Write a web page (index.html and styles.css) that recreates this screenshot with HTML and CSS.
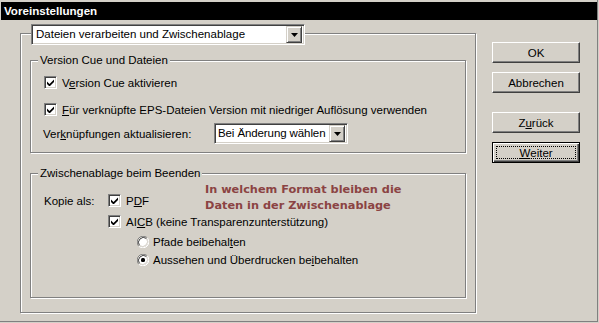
FILE: index.html
```html
<!DOCTYPE html>
<html>
<head>
  <title>Voreinstellungen</title>
  <link rel="stylesheet" href="styles.css">
</head>
<body>
  <div class="window">
    <div class="titlebar">Voreinstellungen</div>

    <div class="content">
      <div class="frame outer">
        <div class="combo panel-combo">
          <span class="combo-text">Dateien verarbeiten und Zwischenablage</span>
          <span class="combo-button"><svg width="7" height="4" viewBox="0 0 7 4"><path d="M0 0h7L3.5 4z" fill="#000"/></svg></span>
        </div>

        <div class="frame group group-version">
          <div class="group-title">Version Cue und Dateien</div>
          <div class="row row-first">
            <span class="check"><svg width="7" height="7" viewBox="0 0 7 7"><path d="M0 2.5l2.5 2.5L7 0.5v2.6L2.5 7.5 0 5z" fill="#000"/></svg></span>
            <span class="label">V<u>e</u>rsion Cue aktivieren</span>
          </div>
          <div class="row row-second">
            <span class="check"><svg width="7" height="7" viewBox="0 0 7 7"><path d="M0 2.5l2.5 2.5L7 0.5v2.6L2.5 7.5 0 5z" fill="#000"/></svg></span>
            <span class="label"><u>F</u>ür verknüpfte EPS-Dateien Version mit niedriger Auflösung verwenden</span>
          </div>
          <div class="row row-select">
            <span class="select-label">Ver<u>k</u>nüpfungen aktualisieren:</span>
            <div class="combo small-combo">
              <span class="combo-text">Bei Änderung wählen</span>
              <span class="combo-button"><svg width="7" height="4" viewBox="0 0 7 4"><path d="M0 0h7L3.5 4z" fill="#000"/></svg></span>
            </div>
          </div>
        </div>

        <div class="frame group group-clip">
          <div class="group-title">Zwischenablage beim Beenden</div>
          <div class="note">In welchem Format bleiben die<br>Daten in der Zwischenablage</div>
          <div class="row row-copy">
            <span class="copy-label">Kopie als:</span>
            <span class="check"><svg width="7" height="7" viewBox="0 0 7 7"><path d="M0 2.5l2.5 2.5L7 0.5v2.6L2.5 7.5 0 5z" fill="#000"/></svg></span>
            <span class="label">P<u>D</u>F</span>
          </div>
          <div class="row row-aicb">
            <span class="check"><svg width="7" height="7" viewBox="0 0 7 7"><path d="M0 2.5l2.5 2.5L7 0.5v2.6L2.5 7.5 0 5z" fill="#000"/></svg></span>
            <span class="label">AI<u>C</u>B (keine Transparenzunterstützung)</span>
          </div>
          <div class="row radio-row radio-first">
            <svg class="radio" width="12" height="12" viewBox="0 0 12 12">
              <circle cx="6" cy="6" r="5" fill="#fff"/>
              <path d="M10.24 1.76A6 6 0 0 0 1.76 10.24" stroke="#808080" fill="none"/>
              <path d="M1.76 10.24A6 6 0 0 0 10.24 1.76" stroke="#fff" fill="none"/>
              <path d="M9.5 2.5A5 5 0 0 0 2.5 9.5" stroke="#404040" fill="none"/>
              <path d="M2.5 9.5A5 5 0 0 0 9.5 2.5" stroke="#d4d0c8" fill="none"/>
            </svg>
            <span class="label">Pfade beibehal<u>t</u>en</span>
          </div>
          <div class="row radio-row radio-second">
            <svg class="radio" width="12" height="12" viewBox="0 0 12 12">
              <circle cx="6" cy="6" r="5" fill="#fff"/>
              <path d="M10.24 1.76A6 6 0 0 0 1.76 10.24" stroke="#808080" fill="none"/>
              <path d="M1.76 10.24A6 6 0 0 0 10.24 1.76" stroke="#fff" fill="none"/>
              <path d="M9.5 2.5A5 5 0 0 0 2.5 9.5" stroke="#404040" fill="none"/>
              <path d="M2.5 9.5A5 5 0 0 0 9.5 2.5" stroke="#d4d0c8" fill="none"/>
              <rect x="4" y="4" width="4" height="4" rx="1.5" fill="#000"/>
            </svg>
            <span class="label">Aussehen und Überdrucken be<u>i</u>behalten</span>
          </div>
        </div>
      </div>

      <div class="buttons">
        <div class="button">OK</div>
        <div class="button">Abbrechen</div>
        <div class="button button-gap">Z<u>u</u>rück</div>
        <div class="button button-default"><span class="focus"><u>W</u>eiter</span></div>
      </div>
    </div>
  </div>
</body>
</html>
```

FILE: styles.css
```css
/* Windows classic dialog */
body {
  margin: 0;
  background-color: #d4d0c8;
  font-family: "Liberation Sans", Arial, sans-serif;
  font-size: 11.5px;
  color: #000;
}

u {
  text-decoration: underline;
  text-underline-offset: 1px;
}

.window {
  width: 598px;
  height: 322px;
  box-sizing: border-box;
  padding: 2px 0 0 1px;
  border-right: 1px solid #808080;
  border-bottom: 1px solid #808080;
}

.titlebar {
  height: 18px;
  line-height: 18px;
  padding-left: 3px;
  background-color: #000;
  color: #fff;
  font-weight: bold;
  font-size: 11.6px;
}

.content {
  display: flex;
  align-items: flex-start;
}

/* Etched frames */
.frame {
  border: 1px solid #808080;
  box-shadow: 1px 1px 0 #fff, inset 1px 1px 0 #fff;
  box-sizing: border-box;
}

.outer {
  margin: 13px 0 0 19px;
  width: 456px;
  height: 280px;
  padding-left: 9px;
}

.group {
  width: 436px;
  padding-left: 13px;
}

.group-version {
  margin-top: 15px;
  height: 93px;
}

.group-clip {
  position: relative;
  margin-top: 20px;
  height: 125px;
}

.group-title {
  width: fit-content;
  height: 13px;
  line-height: 13px;
  margin: -7px 0 0 -6px;
  padding: 0 2px;
  background-color: #d4d0c8;
}

/* Combo boxes */
.combo {
  display: flex;
  align-items: center;
  height: 21px;
  box-sizing: border-box;
  background-color: #fff;
  border: 1px solid;
  border-color: #808080 #fff #fff #808080;
  box-shadow: inset 1px 1px 0 #404040, inset -1px -1px 0 #d4d0c8;
  padding: 2px;
}

.panel-combo {
  width: 274px;
  margin: -10px 0 0 1px;
}

.small-combo {
  width: 134px;
}

.combo-text {
  flex: 1;
  padding-left: 2px;
  line-height: 15px;
  white-space: nowrap;
  overflow: hidden;
}

.small-combo .combo-text {
  padding-left: 1px;
  letter-spacing: -0.1px;
}

.combo-button {
  display: flex;
  align-items: center;
  justify-content: center;
  flex-shrink: 0;
  width: 16px;
  height: 17px;
  box-sizing: border-box;
  margin: -2px 0;
  border: 1px solid;
  border-color: #d4d0c8 #404040 #404040 #d4d0c8;
  box-shadow: inset 1px 1px 0 #fff, inset -1px -1px 0 #808080;
  background-color: #d4d0c8;
}

/* Rows */
.row {
  display: flex;
  align-items: center;
  height: 13px;
  white-space: nowrap;
}

.row-first {
  margin-top: 9px;
}

.row-second {
  margin-top: 14px;
}

.row-select {
  margin-top: 7px;
  height: 21px;
}

.select-label {
  width: 171px;
  margin-left: -1px;
}

.row-copy {
  margin-top: 14px;
}

.copy-label {
  width: 64px;
}

.row-aicb {
  margin-top: 8px;
  padding-left: 64px;
}

.radio-row {
  height: 12px;
  padding-left: 93px;
}

.radio-first {
  margin-top: 8px;
}

.radio-second {
  margin-top: 6px;
}

.check {
  display: flex;
  align-items: center;
  justify-content: center;
  width: 13px;
  height: 13px;
  box-sizing: border-box;
  background-color: #fff;
  border: 1px solid;
  border-color: #808080 #fff #fff #808080;
  box-shadow: inset 1px 1px 0 #404040, inset -1px -1px 0 #d4d0c8;
}

.check + .label {
  margin-left: 5px;
}

.radio + .label {
  margin-left: 4px;
}

.note {
  position: absolute;
  left: 174px;
  top: 8px;
  font-family: "DejaVu Sans", sans-serif;
  font-weight: bold;
  font-size: 11.3px;
  line-height: 16px;
  color: #8b4343;
}

/* Buttons */
.buttons {
  display: flex;
  flex-direction: column;
  gap: 9px;
  margin: 22px 0 0 16px;
}

.button {
  width: 88px;
  height: 21px;
  box-sizing: border-box;
  display: flex;
  align-items: center;
  justify-content: center;
  border: 1px solid;
  border-color: #fff #404040 #404040 #fff;
  box-shadow: inset -1px -1px 0 #808080;
}

.button-gap {
  margin-top: 10px;
}

.button-default {
  border-color: #000;
  box-shadow: inset 1px 1px 0 #fff, inset -1px -1px 0 #404040, inset -2px -2px 0 #808080;
}

.focus {
  flex: 1;
  align-self: stretch;
  margin: 3px;
  border: 1px dotted #000;
  display: flex;
  align-items: center;
  justify-content: center;
}
```
